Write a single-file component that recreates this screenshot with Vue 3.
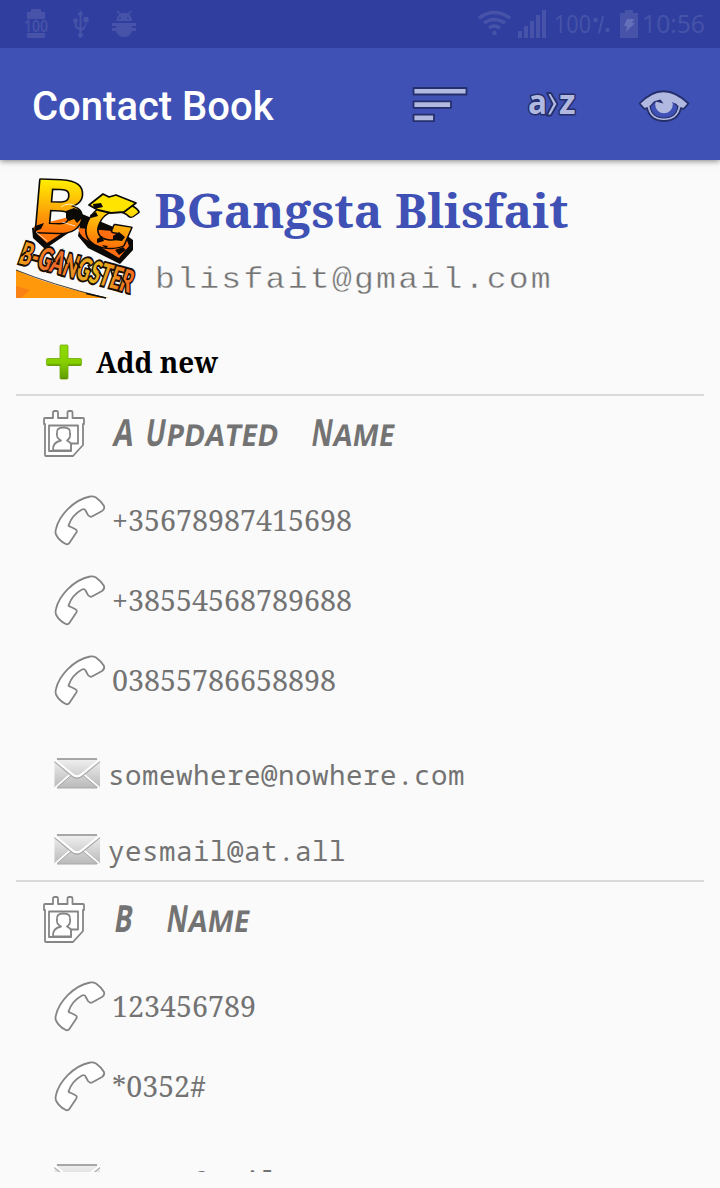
<script setup>
const contacts = [
  {
    title: [
      { cap: 'A', rest: '', x: 0, w: 20, rw: 0 },
      { cap: 'U', rest: 'PDATED', x: 32, w: 20, rw: 112 },
      { cap: 'N', rest: 'AME', x: 198, w: 21, rw: 61 },
    ],
    phones: [
      { n: '+35678987415698', w: 240 },
      { n: '+38554568789688', w: 240 },
      { n: '03855786658898', w: 224 },
    ],
    mails: ['somewhere@nowhere.com', 'yesmail@at.all'],
  },
  {
    title: [
      { cap: 'B', rest: '', x: 1, w: 18, rw: 0 },
      { cap: 'N', rest: 'AME', x: 53, w: 21, rw: 61 },
    ],
    phones: [
      { n: '123456789', w: 144 },
      { n: '*0352#', w: 94 },
    ],
    mails: ['names@mail.com'],
  },
]
</script>

<template>
  <div class="screen">
    <header class="status">
      <svg class="status-art" width="720" height="48" viewBox="0 0 720 48">
        <g class="dim">
          <path d="M31 9h10v3h4v7H27v-7h4zM27 33h18v5H27z" />
          <text x="24" y="32" font-size="17" font-weight="600" textLength="24" lengthAdjust="spacingAndGlyphs">100</text>
          <path d="M80.500 10l3 5h-2v13q4-1 4-6h-2v-5h5v5h-2q0 7-5 9v2a2.500 2.500 0 1 1-2 0v-3q-5-1-5-7a2.500 2.500 0 1 1 2 0q0 4 3 5V15h-2z" />
          <path d="M116.500 21a7.500 7.500 0 0 1 3-6.500l-3-3 1.200-1 3 3q3-1.500 7 0l3-3 1.200 1-3 3a7.500 7.500 0 0 1 3 6.500zM112 23h24v3h-4v2h4v3h-4q-2 6-8 6t-8-6h-4v-3h4v-2h-4z" />
          <g class="sky"><circle cx="120" cy="18" r="1" /><circle cx="128" cy="18" r="1" /></g>
          <g class="wifi"><path d="M479 18q15-11 31 0" /><path d="M484 23q10-7 21 0" /><path d="M489 28q5-4 11 0" /></g>
          <circle cx="494.500" cy="33" r="2.200" />
          <path d="M518 31h4v7h-4zM524 26h4v12h-4zM530 21h4v17h-4zM536 15h4v23h-4zM542 10h4v28h-4z" />
          <text x="554" y="33" font-size="25" textLength="37" lengthAdjust="spacingAndGlyphs">100</text>
          <circle cx="595.500" cy="20" r="2.200" /><circle cx="607.500" cy="30" r="2.200" /><path d="M602 16l2 .5-4 17-2-.5z" />
          <path d="M625 10h8v3h5v25h-18V13h5z" />
          <path class="bolt" d="M627 19h7l-2 4h3l-9 9 1-6h-3z" />
          <text x="642" y="33" font-size="25" textLength="63" lengthAdjust="spacingAndGlyphs">10:56</text>
        </g>
      </svg>
    </header>

    <nav class="appbar">
      <h1>Contact Book</h1>
      <div class="actions">
        <svg width="56" height="40" viewBox="0 0 56 40">
          <g class="glyph"><rect x="1.500" y="4" width="53" height="6.500" /><rect x="1.500" y="17.300" width="37.500" height="6.500" /><rect x="1.500" y="30.600" width="20.500" height="6.500" /></g>
        </svg>
        <svg width="50" height="40" viewBox="0 0 50 40">
          <text class="az" x="0" y="29.500" font-size="34" textLength="19" lengthAdjust="spacingAndGlyphs">a</text>
          <text class="az" x="31" y="29.500" font-size="34" textLength="16.500" lengthAdjust="spacingAndGlyphs">z</text>
          <path class="glyph" d="M19 9h4l6.500 11-6.500 11.500H18.500l6-11.500z" />
        </svg>
        <svg width="52" height="40" viewBox="0 0 52 40">
          <path class="glyph" d="M1.500 19.500Q25-5 50.500 19.500L45.500 25L43 24Q40 37 26 37T9 24L6.500 25Z" />
          <path class="eye" d="M12 22.500Q14 34 26 34T40 22.500L35 17.500L17 17.500Z" />
          <circle class="iris" cx="26" cy="20.500" r="8.800" />
          <path class="lid" d="M12 18Q26 5 40 18L37 19.500L31 16L25 19L18 16Z" />
          <path class="notch" d="M12.500 19.500Q18 16 22.500 15.500L25.500 19.500L17.500 17.500Z" />
        </svg>
      </div>
    </nav>

    <main>
      <section class="profile">
        <svg class="logo" width="120" height="120" viewBox="0 0 120 120">
          <defs>
            <linearGradient id="fire" x1="0" y1="0" x2="0" y2="1"><stop offset=".2" stop-color="#fff000" /><stop offset=".55" stop-color="#fdab08" /><stop offset=".85" stop-color="#ff6a08" /></linearGradient>
            <linearGradient id="ember" x1="0" y1="0" x2="1" y2="0"><stop offset="0" stop-color="#f2a01a" /><stop offset=".3" stop-color="#ee672b" /><stop offset=".65" stop-color="#e6b71d" /><stop offset="1" stop-color="#f36a23" /></linearGradient>
          </defs>
          <path d="M0 92Q34 108 93 120H0z" fill="#ff990b" /><path d="M0 108l14 4-9 8H0z" fill="#f98012" />
          <path d="M0 92Q34 106 90 120" fill="none" stroke="#111" stroke-width=".8" /><path d="M70 115.500l20 4.500" stroke="#111" stroke-width="1.500" />
          <path d="M16 50L17 60 29 71 64 47 62 58 72 70 104 86 117 72 117 62 100 50 66 36z" fill="#0b0905" />
          <path d="M18 48L19 54 31 65 62 45 64 36z" fill="#ff7409" />
          <path d="M62 50Q64 60 76 64L103 80 113 68 108 54z" fill="#ff6d10" />
          <g transform="translate(19 54) rotate(2) skewX(-3)">
            <text class="tag" x="-5" y="0" font-size="72" textLength="53" lengthAdjust="spacingAndGlyphs">B</text>
          </g>
          <g transform="translate(64 65) rotate(9) skewX(-15)">
            <text class="tag" x="-3" y="0" font-size="62" textLength="48" lengthAdjust="spacingAndGlyphs">G</text>
          </g>
          <path d="M87 16l6 3 7-2 20 8-12 9-13 1-13-3-9-5z" fill="#ffe400" stroke="#0b0905" stroke-width="1.800" stroke-linejoin="round" />
          <path d="M50 33l8-3 7 3 1 7-5 5-3-4-5 2-3-3zM19 48l9-3-3 6-5 2zM77 26l8-1 2 4-9 2zM74 37l6-3 2 4-7 2zM81 61l5-3 2 5-7 2zM97 58l6-4 6 5-3 4-9-1zM99 72l8-3 3 3-7 5zM86 67l6 1-2 3z" fill="#0b0905" />
          <path d="M45 29q8-6 16 0M46 44l13 4M20 54l11 9" fill="none" stroke="#fff" stroke-width=".7" />
          <g transform="translate(2 85) rotate(15)">
            <text class="small-tag" x="0" y="0" font-size="31" textLength="116" lengthAdjust="spacingAndGlyphs">B-GANGSTER</text>
          </g>
          <path d="M5 78l5-4M36 78l3 6M48 79l3 7M60 84l4 6M72 87l3 7M83 94l4 5M95 92l2 7M105 99l4 6" stroke="#160d03" stroke-width="1.800" />
        </svg>
        <div class="who">
          <svg width="430" height="70" viewBox="0 0 430 70">
            <text class="name" x="-1.500" y="50" font-size="48" textLength="414" lengthAdjust="spacingAndGlyphs">BGangsta Blisfait</text>
          </svg>
          <svg width="430" height="50" viewBox="0 0 430 50">
            <text class="account" x="-1" y="40" font-size="29" textLength="398" lengthAdjust="spacingAndGlyphs">blisfait@gmail.com</text>
          </svg>
        </div>
      </section>

      <div class="add">
        <svg width="40" height="40" viewBox="0 0 40 40">
          <defs><linearGradient id="leaf" x1="0" y1="0" x2="0" y2="1"><stop offset="0" stop-color="#8fdc00" /><stop offset=".5" stop-color="#86cf00" /><stop offset="1" stop-color="#5f9c00" /></linearGradient></defs>
          <path d="M17 3h6q1 0 1 1v12.500h12.500q1 0 1 1v5q0 1-1 1H24V36q0 1-1 1h-6q-1 0-1-1V23.500H3.500q-1 0-1-1v-5q0-1 1-1H16V4q0-1 1-1z" fill="url(#leaf)" stroke="#6faa08" stroke-width=".8" />
          <path d="M3.500 23h13M24 23h13M17 36.500h6" stroke="#558900" stroke-width=".9" />
        </svg>
        <svg width="130" height="40" viewBox="0 0 130 40">
          <text class="add-label" x="0" y="31" font-size="28" textLength="122" lengthAdjust="spacingAndGlyphs">Add new</text>
        </svg>
      </div>

      <article v-for="(c, i) in contacts" :key="i">
        <div class="heading">
          <svg width="44" height="50" viewBox="0 0 44 50">
            <g class="line">
              <path d="M3 15H2V10q0-1 1-1h8V3.500q0-1.500 1.500-1.500h2q1.500 0 1.500 1.500V9h9.500V3.500q0-1.500 1.500-1.500h2q1.500 0 1.500 1.500V9H41q1 0 1 1v5h-1v21L31 47H4q-1 0-1-1z" />
              <path d="M7 16.500h29v18h-7v7.500H7z" />
              <path d="M11 41.500q-1-8 8-10-5-3-4-7-1-6 6.500-6t6.500 6q1 4-3 7 4 2 4 4v6z" />
            </g>
          </svg>
          <svg width="320" height="50" viewBox="0 0 320 50">
            <g v-for="t in c.title" :key="t.x" :transform="`translate(${t.x} 37) skewX(-9)`" class="caps">
              <text x="0" y="0" font-size="37.500" :textLength="t.w" lengthAdjust="spacingAndGlyphs">{{ t.cap }}</text>
              <text v-if="t.rest" :x="t.w + 1" y="0" font-size="30" :textLength="t.rw" lengthAdjust="spacingAndGlyphs">{{ t.rest }}</text>
            </g>
          </svg>
        </div>
        <div v-for="p in c.phones" :key="p.n" class="phone">
          <svg width="52" height="52" viewBox="0 0 52 52">
            <path class="line" d="M2 34C5 21 19 5 36 1.500Q39 .8 42 2.500Q47 6 50 11Q51 14 48 16L38 21.500Q36 22.500 34 20L31.500 15.500Q31 13.500 28 14.500Q18 20 14.500 30.500Q15 31.500 17 32L21 34Q24 35.500 22 38L16 47Q14 50.500 11 48.500Q5 45.500 2 39.500Q1 37.500 2 34Z" />
          </svg>
          <svg width="260" height="40" viewBox="0 0 260 40">
            <text class="number" x="0" y="30" font-size="28.300" :textLength="p.w" lengthAdjust="spacingAndGlyphs">{{ p.n }}</text>
          </svg>
        </div>
        <div class="mails">
          <div v-for="m in c.mails" :key="m" class="mail">
            <svg width="48" height="32" viewBox="0 0 48 32">
              <defs><linearGradient :id="'paper' + i" x1="0" y1="0" x2="0" y2="1"><stop offset="0" stop-color="#f0f0f0" /><stop offset="1" stop-color="#b9b9b9" /></linearGradient></defs>
              <rect x="1.500" y="1" width="45.500" height="29" :fill="`url(#paper${i})`" />
              <path d="M4 1h40" stroke="#8d8d8d" stroke-width="1.300" />
              <path d="M2 30L19 15M46.500 30L29 15" stroke="#fff" stroke-width="2" />
              <path d="M4 29.500L18.500 17M44.500 29.500L29.500 17" stroke="#a5a5a5" />
              <path d="M1.500 3.500L18 17.500Q24 23 30 17.500L47 3.500" fill="none" stroke="#aaa" stroke-width="1.200" />
              <path d="M1.500 1.500L19 16Q24 20.500 29 16L47 1.500" fill="none" stroke="#fff" stroke-width="2" />
              <path d="M4 30h40" stroke="#aaa" />
            </svg>
            <span>{{ m }}</span>
          </div>
        </div>
      </article>
    </main>
  </div>
</template>

<style>
html, body { margin: 0; background: #fafafa; overflow: hidden; }
</style>

<style scoped>
.screen { width: 720px; height: 1188px; display: flex; flex-direction: column; background: #fafafa; overflow: hidden; box-sizing: border-box; padding-bottom: 16px; }
svg { display: block; flex: none; overflow: visible; }
.status { height: 48px; flex: none; background: #303f9f; position: relative; z-index: 1; }
.dim { fill: #4653a9; font-family: "Open Sans", sans-serif; }
.sky { fill: #303f9f; }
.bolt { fill: #6470b8; }
.wifi { fill: none; stroke: #4653a9; stroke-width: 3.5; }
.appbar { height: 112px; flex: none; background: #3f51b5; display: flex; align-items: center; justify-content: space-between; padding: 0 30px 0 32px; box-shadow: 0 1px 6px rgba(0, 0, 0, .5); box-sizing: border-box; position: relative; }
h1 { margin: 6px 0 0; color: #fff; font: 500 40px/48px Roboto, sans-serif; }
.actions { display: flex; align-items: center; gap: 60px; width: 278px; }
.glyph, .az { fill: #b2b9e1; stroke: #252f6b; stroke-width: 1.8; stroke-linejoin: round; }
.az { font-family: "Open Sans", sans-serif; font-weight: 700; paint-order: stroke; stroke-width: 3; }
.eye { fill: #3f51b5; stroke: #252f6b; stroke-width: 1.2; }
.iris, .lid { fill: #b2b9e1; }
.notch { fill: #252f6b; }
main { flex: 1; min-height: 0; overflow: hidden; padding: 18px 16px 0; }
.profile { display: flex; height: 120px; }
.tag { fill: url(#fire); stroke: #0b0905; stroke-width: 3; stroke-linejoin: round; paint-order: stroke; font-family: Lato, sans-serif; font-weight: 900; }
.small-tag { fill: url(#ember); stroke: #160d03; stroke-width: 4; paint-order: stroke; font-family: Lato, sans-serif; font-style: italic; font-weight: 900; }
.who { display: flex; flex-direction: column; padding-left: 20px; }
.name { fill: #3f51b5; font-family: "Noto Serif", "DejaVu Serif Condensed", "DejaVu Serif", serif; font-weight: 700; }
.account { fill: #737373; font-family: "Liberation Mono", monospace; letter-spacing: 2px; stroke: #fafafa; stroke-width: .35px; }
.add { display: flex; align-items: center; height: 96px; padding: 32px 0 0 28px; gap: 12px; box-sizing: border-box; }
.add-label { fill: #000; font-family: "Noto Serif", "DejaVu Serif Condensed", "DejaVu Serif", serif; font-weight: 700; }
article { border-top: 2px solid #dadada; }
.heading { height: 84px; display: flex; padding: 13px 0 0 26px; gap: 26px; box-sizing: border-box; }
.line { fill: #fff; stroke: #858585; stroke-width: 1.8; stroke-linejoin: round; }
.caps { fill: #737373; font-family: "Open Sans", sans-serif; font-weight: 700; }
.phone { height: 80px; display: flex; align-items: center; padding: 2px 0 0 38px; gap: 6px; box-sizing: border-box; }
.number { fill: #737373; font-family: "Noto Serif", "DejaVu Serif Condensed", "DejaVu Serif", serif; }
.mails { padding-top: 8px; }
.mail { height: 76px; display: flex; align-items: flex-start; padding: 30px 0 0 37px; gap: 7px; box-sizing: border-box; }
.mail span { font: 27.5px/32px "Noto Sans Mono", "DejaVu Sans Mono", monospace; letter-spacing: .5px; color: #737373; margin-top: 1px; }
</style>
